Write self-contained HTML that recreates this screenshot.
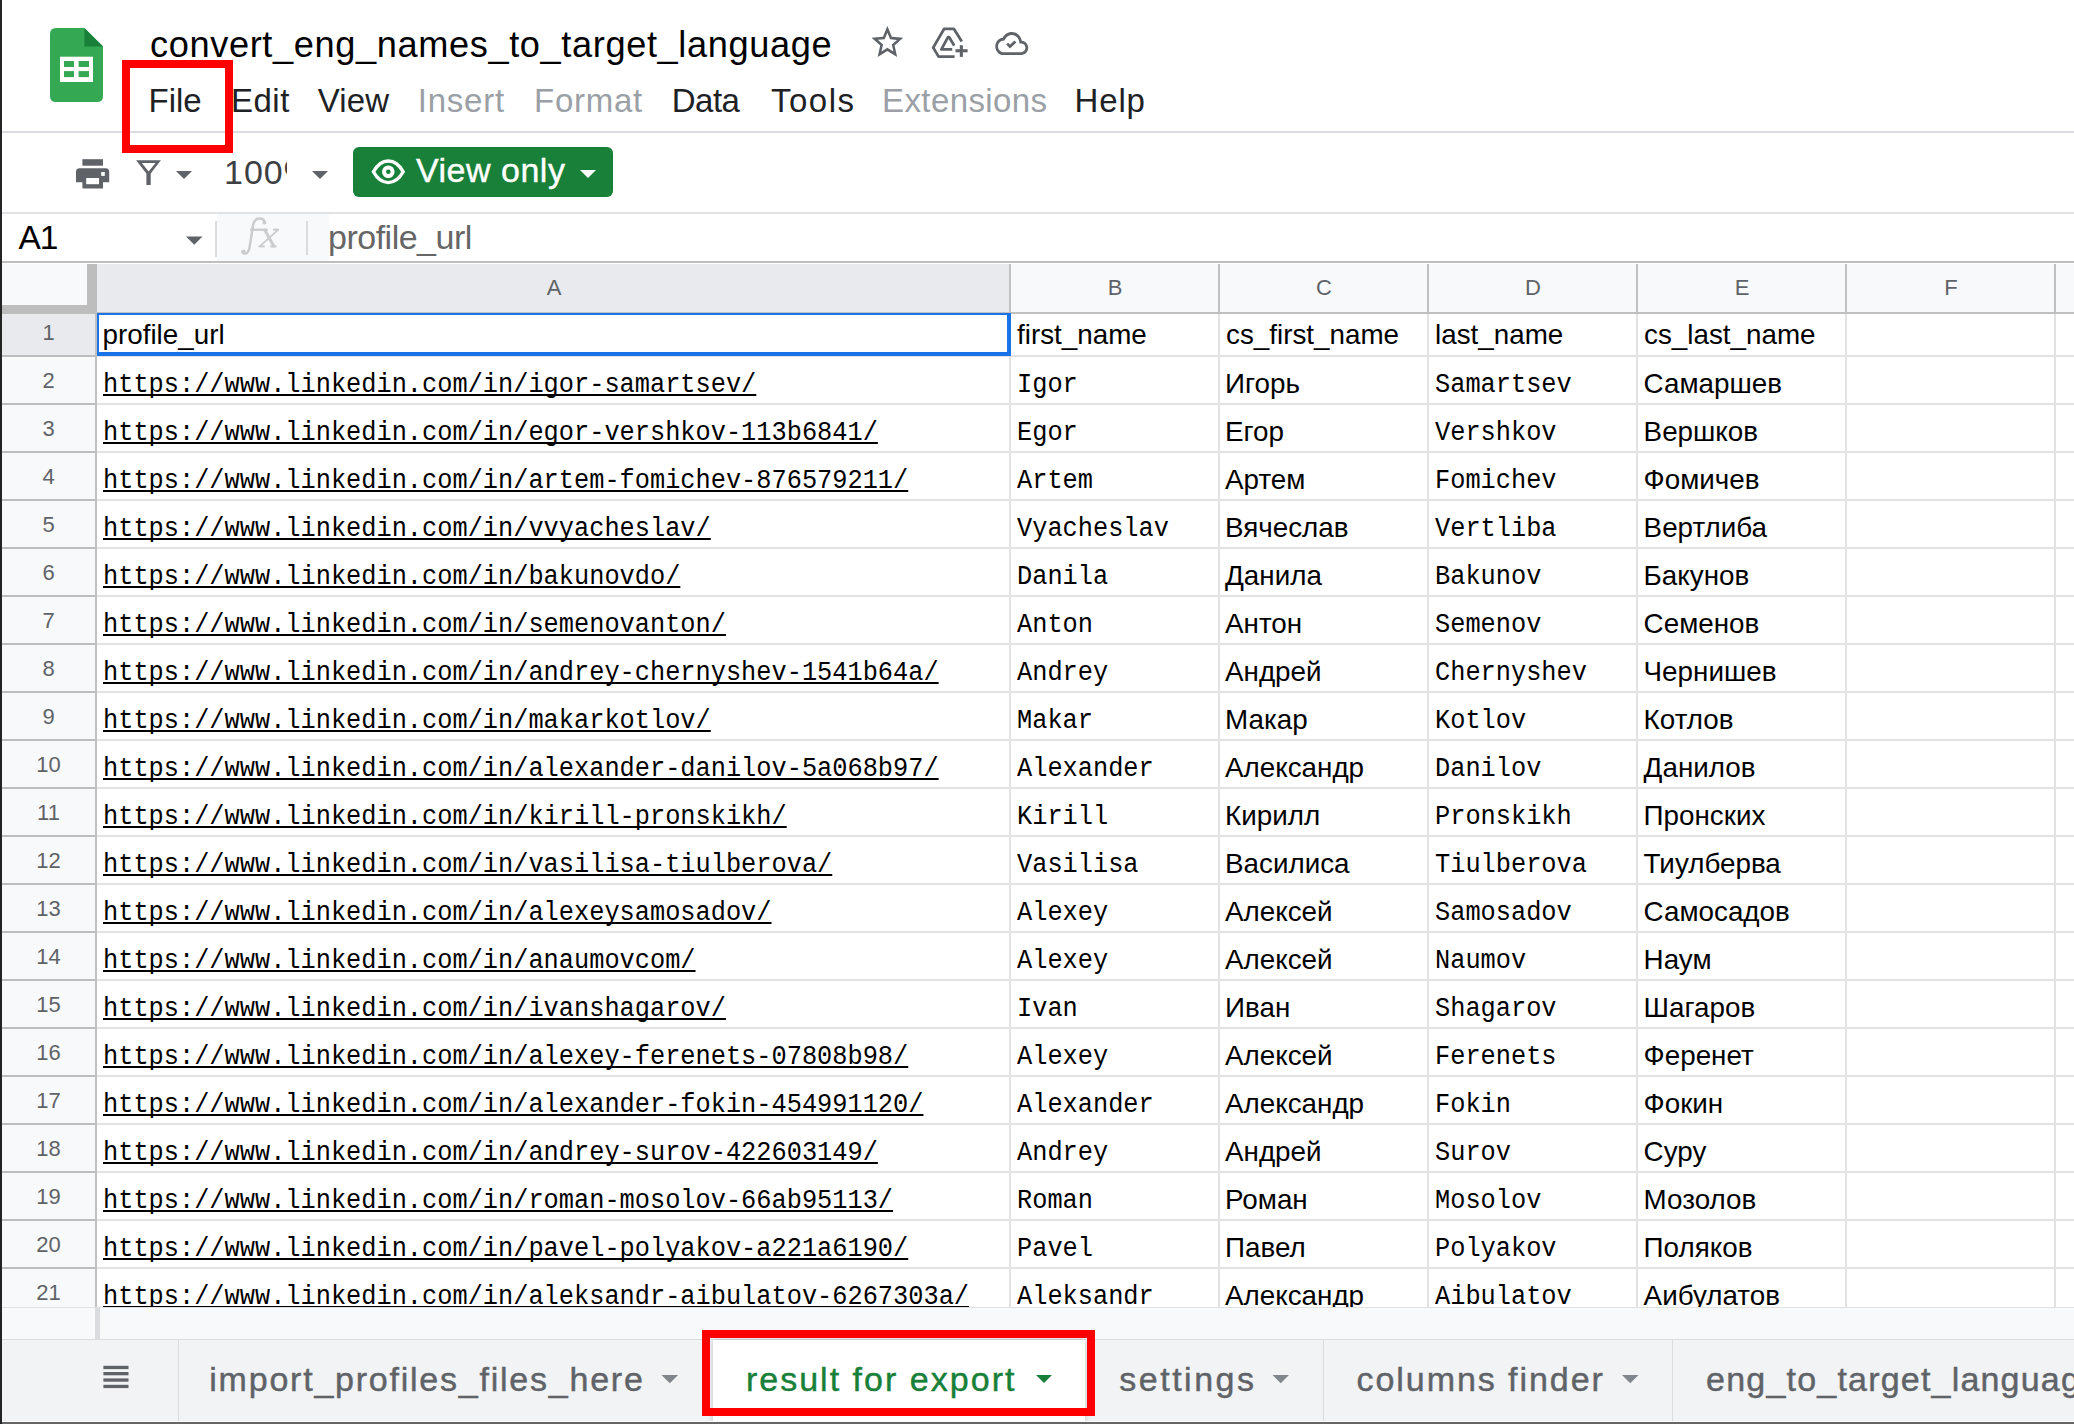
<!DOCTYPE html>
<html><head><meta charset="utf-8"><title>convert_eng_names_to_target_language</title>
<style>
html,body{margin:0;padding:0;}
body{width:2074px;height:1424px;overflow:hidden;position:relative;background:#fff;font-family:'Liberation Sans', sans-serif;}
.a{position:absolute;}
.t{position:absolute;white-space:pre;line-height:0;}
.c{display:inline-block;transform:translateX(-50%);}
</style></head><body>
<div class="a" style="left:0px;top:0px;width:2074px;height:1424px;background:#ffffff;"></div>
<div class="t" style="top:45.00px;font-size:36.2px;color:#000000;font-family:'Liberation Sans', sans-serif;left:150px;letter-spacing:0.62px;">convert_eng_names_to_target_language</div>
<div class="t" style="top:101.10px;font-size:33px;color:#202124;font-family:'Liberation Sans', sans-serif;left:148.5px;letter-spacing:0px;">File</div>
<div class="t" style="top:101.10px;font-size:33px;color:#202124;font-family:'Liberation Sans', sans-serif;left:231.1px;letter-spacing:0.45px;">Edit</div>
<div class="t" style="top:101.10px;font-size:33px;color:#202124;font-family:'Liberation Sans', sans-serif;left:317.79999999999995px;letter-spacing:0.1px;">View</div>
<div class="t" style="top:101.10px;font-size:33px;color:#9aa0a6;font-family:'Liberation Sans', sans-serif;left:417.8px;letter-spacing:0.75px;">Insert</div>
<div class="t" style="top:101.10px;font-size:33px;color:#9aa0a6;font-family:'Liberation Sans', sans-serif;left:534px;letter-spacing:0.74px;">Format</div>
<div class="t" style="top:101.10px;font-size:33px;color:#202124;font-family:'Liberation Sans', sans-serif;left:671.8px;letter-spacing:-0.55px;">Data</div>
<div class="t" style="top:101.10px;font-size:33px;color:#202124;font-family:'Liberation Sans', sans-serif;left:771px;letter-spacing:1.5px;">Tools</div>
<div class="t" style="top:101.10px;font-size:33px;color:#9aa0a6;font-family:'Liberation Sans', sans-serif;left:882px;letter-spacing:0.4px;">Extensions</div>
<div class="t" style="top:101.10px;font-size:33px;color:#202124;font-family:'Liberation Sans', sans-serif;left:1074.6px;letter-spacing:0.8px;">Help</div>
<div class="a" style="left:2px;top:131px;width:2072px;height:2px;background:#dadce0;"></div>
<div class="a" style="left:200px;top:140px;width:87px;height:60px;overflow:hidden;">
<div class="t" style="top:32.00px;font-size:34px;color:#3c4043;font-family:'Liberation Sans', sans-serif;left:24px;letter-spacing:1px;">100%</div>
</div>
<div class="a" style="left:353px;top:147px;width:260px;height:50px;background:#188038;border-radius:6px;"></div>
<div class="t" style="top:170.00px;font-size:34px;color:#ffffff;font-family:'Liberation Sans', sans-serif;left:416px;letter-spacing:0.5px;-webkit-text-stroke:0.4px #fff;">View only</div>
<div class="a" style="left:2px;top:212px;width:2072px;height:2px;background:#e0e2e5;"></div>
<div class="t" style="top:237.50px;font-size:33.5px;color:#000000;font-family:'Liberation Sans', sans-serif;left:18.5px;letter-spacing:-1px;">A1</div>
<div class="a" style="left:217px;top:214px;width:112px;height:48px;background:#f8f9fa;"></div>
<div class="a" style="left:215px;top:221px;width:2px;height:36px;background:#dadce0;"></div>
<div class="a" style="left:306px;top:221px;width:2px;height:34px;background:#dadce0;"></div>
<div class="t" style="top:237.00px;font-size:34px;color:#666666;font-family:'Liberation Sans', sans-serif;left:328px;letter-spacing:-0.5px;">profile_url</div>
<div class="a" style="left:2px;top:261px;width:2072px;height:2px;background:#bebebe;"></div>
<div class="a" style="left:2px;top:264px;width:2072px;height:48px;background:#f8f9fa;"></div>
<div class="a" style="left:97px;top:264px;width:913px;height:48px;background:#e8eaed;"></div>
<div class="t" style="top:287.50px;font-size:22px;color:#5f6368;font-family:'Liberation Sans', sans-serif;left:554.0px;width:0;text-align:center;"><span class=c>A</span></div>
<div class="t" style="top:287.50px;font-size:22px;color:#5f6368;font-family:'Liberation Sans', sans-serif;left:1115.0px;width:0;text-align:center;"><span class=c>B</span></div>
<div class="t" style="top:287.50px;font-size:22px;color:#5f6368;font-family:'Liberation Sans', sans-serif;left:1324.0px;width:0;text-align:center;"><span class=c>C</span></div>
<div class="t" style="top:287.50px;font-size:22px;color:#5f6368;font-family:'Liberation Sans', sans-serif;left:1533.0px;width:0;text-align:center;"><span class=c>D</span></div>
<div class="t" style="top:287.50px;font-size:22px;color:#5f6368;font-family:'Liberation Sans', sans-serif;left:1742.0px;width:0;text-align:center;"><span class=c>E</span></div>
<div class="t" style="top:287.50px;font-size:22px;color:#5f6368;font-family:'Liberation Sans', sans-serif;left:1951.0px;width:0;text-align:center;"><span class=c>F</span></div>
<div class="a" style="left:1009px;top:264px;width:2px;height:48px;background:#c0c0c0;"></div>
<div class="a" style="left:1218px;top:264px;width:2px;height:48px;background:#c0c0c0;"></div>
<div class="a" style="left:1427px;top:264px;width:2px;height:48px;background:#c0c0c0;"></div>
<div class="a" style="left:1636px;top:264px;width:2px;height:48px;background:#c0c0c0;"></div>
<div class="a" style="left:1845px;top:264px;width:2px;height:48px;background:#c0c0c0;"></div>
<div class="a" style="left:2054px;top:264px;width:2px;height:48px;background:#c0c0c0;"></div>
<div class="a" style="left:2px;top:312px;width:2072px;height:2px;background:#c0c0c0;"></div>
<div class="a" style="left:2px;top:314px;width:93px;height:993px;background:#f8f9fa;"></div>
<div class="a" style="left:2px;top:314px;width:93px;height:41px;background:#e8eaed;"></div>
<div class="a" style="left:95px;top:264px;width:2px;height:1043px;background:#c0c0c0;"></div>
<div class="a" style="left:97px;top:314px;width:1977px;height:993px;overflow:hidden;">
<div class="a" style="left:0px;top:41px;width:1977px;height:2px;background:#e2e2e2;"></div>
<div class="a" style="left:0px;top:89px;width:1977px;height:2px;background:#e2e2e2;"></div>
<div class="a" style="left:0px;top:137px;width:1977px;height:2px;background:#e2e2e2;"></div>
<div class="a" style="left:0px;top:185px;width:1977px;height:2px;background:#e2e2e2;"></div>
<div class="a" style="left:0px;top:233px;width:1977px;height:2px;background:#e2e2e2;"></div>
<div class="a" style="left:0px;top:281px;width:1977px;height:2px;background:#e2e2e2;"></div>
<div class="a" style="left:0px;top:329px;width:1977px;height:2px;background:#e2e2e2;"></div>
<div class="a" style="left:0px;top:377px;width:1977px;height:2px;background:#e2e2e2;"></div>
<div class="a" style="left:0px;top:425px;width:1977px;height:2px;background:#e2e2e2;"></div>
<div class="a" style="left:0px;top:473px;width:1977px;height:2px;background:#e2e2e2;"></div>
<div class="a" style="left:0px;top:521px;width:1977px;height:2px;background:#e2e2e2;"></div>
<div class="a" style="left:0px;top:569px;width:1977px;height:2px;background:#e2e2e2;"></div>
<div class="a" style="left:0px;top:617px;width:1977px;height:2px;background:#e2e2e2;"></div>
<div class="a" style="left:0px;top:665px;width:1977px;height:2px;background:#e2e2e2;"></div>
<div class="a" style="left:0px;top:713px;width:1977px;height:2px;background:#e2e2e2;"></div>
<div class="a" style="left:0px;top:761px;width:1977px;height:2px;background:#e2e2e2;"></div>
<div class="a" style="left:0px;top:809px;width:1977px;height:2px;background:#e2e2e2;"></div>
<div class="a" style="left:0px;top:857px;width:1977px;height:2px;background:#e2e2e2;"></div>
<div class="a" style="left:0px;top:905px;width:1977px;height:2px;background:#e2e2e2;"></div>
<div class="a" style="left:0px;top:953px;width:1977px;height:2px;background:#e2e2e2;"></div>
<div class="a" style="left:0px;top:1001px;width:1977px;height:2px;background:#e2e2e2;"></div>
<div class="a" style="left:912px;top:0px;width:2px;height:993px;background:#e2e2e2;"></div>
<div class="a" style="left:1121px;top:0px;width:2px;height:993px;background:#e2e2e2;"></div>
<div class="a" style="left:1330px;top:0px;width:2px;height:993px;background:#e2e2e2;"></div>
<div class="a" style="left:1539px;top:0px;width:2px;height:993px;background:#e2e2e2;"></div>
<div class="a" style="left:1748px;top:0px;width:2px;height:993px;background:#e2e2e2;"></div>
<div class="a" style="left:1957px;top:0px;width:2px;height:993px;background:#e2e2e2;"></div>
<div class="t" style="top:20.50px;font-size:27.8px;color:#000000;font-family:'Liberation Sans', sans-serif;left:5.5px;">profile_url</div>
<div class="t" style="top:20.50px;font-size:27.8px;color:#000000;font-family:'Liberation Sans', sans-serif;left:920px;">first_name</div>
<div class="t" style="top:20.50px;font-size:27.8px;color:#000000;font-family:'Liberation Sans', sans-serif;left:1129px;">cs_first_name</div>
<div class="t" style="top:20.50px;font-size:27.8px;color:#000000;font-family:'Liberation Sans', sans-serif;left:1338px;">last_name</div>
<div class="t" style="top:20.50px;font-size:27.8px;color:#000000;font-family:'Liberation Sans', sans-serif;left:1547px;">cs_last_name</div>
<div class="t" style="top:71.00px;font-size:27px;color:#000000;font-family:'Liberation Mono', monospace;left:6px;transform:scaleX(0.9377);transform-origin:0 0;text-decoration:underline;text-decoration-thickness:2px;text-decoration-skip-ink:none;text-underline-offset:2px;">https://www.linkedin.com/in/igor-samartsev/</div>
<div class="t" style="top:71.00px;font-size:27px;color:#000000;font-family:'Liberation Mono', monospace;left:920.3px;transform:scaleX(0.9377);transform-origin:0 0;">Igor</div>
<div class="t" style="top:69.50px;font-size:27.8px;color:#000000;font-family:'Liberation Sans', sans-serif;left:1128px;">Игорь</div>
<div class="t" style="top:71.00px;font-size:27px;color:#000000;font-family:'Liberation Mono', monospace;left:1338.4px;transform:scaleX(0.9377);transform-origin:0 0;">Samartsev</div>
<div class="t" style="top:69.50px;font-size:27.8px;color:#000000;font-family:'Liberation Sans', sans-serif;left:1546.6px;">Самаршев</div>
<div class="t" style="top:119.00px;font-size:27px;color:#000000;font-family:'Liberation Mono', monospace;left:6px;transform:scaleX(0.9377);transform-origin:0 0;text-decoration:underline;text-decoration-thickness:2px;text-decoration-skip-ink:none;text-underline-offset:2px;">https://www.linkedin.com/in/egor-vershkov-113b6841/</div>
<div class="t" style="top:119.00px;font-size:27px;color:#000000;font-family:'Liberation Mono', monospace;left:920.3px;transform:scaleX(0.9377);transform-origin:0 0;">Egor</div>
<div class="t" style="top:117.50px;font-size:27.8px;color:#000000;font-family:'Liberation Sans', sans-serif;left:1128px;">Егор</div>
<div class="t" style="top:119.00px;font-size:27px;color:#000000;font-family:'Liberation Mono', monospace;left:1338.4px;transform:scaleX(0.9377);transform-origin:0 0;">Vershkov</div>
<div class="t" style="top:117.50px;font-size:27.8px;color:#000000;font-family:'Liberation Sans', sans-serif;left:1546.6px;">Вершков</div>
<div class="t" style="top:167.00px;font-size:27px;color:#000000;font-family:'Liberation Mono', monospace;left:6px;transform:scaleX(0.9377);transform-origin:0 0;text-decoration:underline;text-decoration-thickness:2px;text-decoration-skip-ink:none;text-underline-offset:2px;">https://www.linkedin.com/in/artem-fomichev-876579211/</div>
<div class="t" style="top:167.00px;font-size:27px;color:#000000;font-family:'Liberation Mono', monospace;left:920.3px;transform:scaleX(0.9377);transform-origin:0 0;">Artem</div>
<div class="t" style="top:165.50px;font-size:27.8px;color:#000000;font-family:'Liberation Sans', sans-serif;left:1128px;">Артем</div>
<div class="t" style="top:167.00px;font-size:27px;color:#000000;font-family:'Liberation Mono', monospace;left:1338.4px;transform:scaleX(0.9377);transform-origin:0 0;">Fomichev</div>
<div class="t" style="top:165.50px;font-size:27.8px;color:#000000;font-family:'Liberation Sans', sans-serif;left:1546.6px;">Фомичев</div>
<div class="t" style="top:215.00px;font-size:27px;color:#000000;font-family:'Liberation Mono', monospace;left:6px;transform:scaleX(0.9377);transform-origin:0 0;text-decoration:underline;text-decoration-thickness:2px;text-decoration-skip-ink:none;text-underline-offset:2px;">https://www.linkedin.com/in/vvyacheslav/</div>
<div class="t" style="top:215.00px;font-size:27px;color:#000000;font-family:'Liberation Mono', monospace;left:920.3px;transform:scaleX(0.9377);transform-origin:0 0;">Vyacheslav</div>
<div class="t" style="top:213.50px;font-size:27.8px;color:#000000;font-family:'Liberation Sans', sans-serif;left:1128px;">Вячеслав</div>
<div class="t" style="top:215.00px;font-size:27px;color:#000000;font-family:'Liberation Mono', monospace;left:1338.4px;transform:scaleX(0.9377);transform-origin:0 0;">Vertliba</div>
<div class="t" style="top:213.50px;font-size:27.8px;color:#000000;font-family:'Liberation Sans', sans-serif;left:1546.6px;">Вертлиба</div>
<div class="t" style="top:263.00px;font-size:27px;color:#000000;font-family:'Liberation Mono', monospace;left:6px;transform:scaleX(0.9377);transform-origin:0 0;text-decoration:underline;text-decoration-thickness:2px;text-decoration-skip-ink:none;text-underline-offset:2px;">https://www.linkedin.com/in/bakunovdo/</div>
<div class="t" style="top:263.00px;font-size:27px;color:#000000;font-family:'Liberation Mono', monospace;left:920.3px;transform:scaleX(0.9377);transform-origin:0 0;">Danila</div>
<div class="t" style="top:261.50px;font-size:27.8px;color:#000000;font-family:'Liberation Sans', sans-serif;left:1128px;">Данила</div>
<div class="t" style="top:263.00px;font-size:27px;color:#000000;font-family:'Liberation Mono', monospace;left:1338.4px;transform:scaleX(0.9377);transform-origin:0 0;">Bakunov</div>
<div class="t" style="top:261.50px;font-size:27.8px;color:#000000;font-family:'Liberation Sans', sans-serif;left:1546.6px;">Бакунов</div>
<div class="t" style="top:311.00px;font-size:27px;color:#000000;font-family:'Liberation Mono', monospace;left:6px;transform:scaleX(0.9377);transform-origin:0 0;text-decoration:underline;text-decoration-thickness:2px;text-decoration-skip-ink:none;text-underline-offset:2px;">https://www.linkedin.com/in/semenovanton/</div>
<div class="t" style="top:311.00px;font-size:27px;color:#000000;font-family:'Liberation Mono', monospace;left:920.3px;transform:scaleX(0.9377);transform-origin:0 0;">Anton</div>
<div class="t" style="top:309.50px;font-size:27.8px;color:#000000;font-family:'Liberation Sans', sans-serif;left:1128px;">Антон</div>
<div class="t" style="top:311.00px;font-size:27px;color:#000000;font-family:'Liberation Mono', monospace;left:1338.4px;transform:scaleX(0.9377);transform-origin:0 0;">Semenov</div>
<div class="t" style="top:309.50px;font-size:27.8px;color:#000000;font-family:'Liberation Sans', sans-serif;left:1546.6px;">Семенов</div>
<div class="t" style="top:359.00px;font-size:27px;color:#000000;font-family:'Liberation Mono', monospace;left:6px;transform:scaleX(0.9377);transform-origin:0 0;text-decoration:underline;text-decoration-thickness:2px;text-decoration-skip-ink:none;text-underline-offset:2px;">https://www.linkedin.com/in/andrey-chernyshev-1541b64a/</div>
<div class="t" style="top:359.00px;font-size:27px;color:#000000;font-family:'Liberation Mono', monospace;left:920.3px;transform:scaleX(0.9377);transform-origin:0 0;">Andrey</div>
<div class="t" style="top:357.50px;font-size:27.8px;color:#000000;font-family:'Liberation Sans', sans-serif;left:1128px;">Андрей</div>
<div class="t" style="top:359.00px;font-size:27px;color:#000000;font-family:'Liberation Mono', monospace;left:1338.4px;transform:scaleX(0.9377);transform-origin:0 0;">Chernyshev</div>
<div class="t" style="top:357.50px;font-size:27.8px;color:#000000;font-family:'Liberation Sans', sans-serif;left:1546.6px;">Чернишев</div>
<div class="t" style="top:407.00px;font-size:27px;color:#000000;font-family:'Liberation Mono', monospace;left:6px;transform:scaleX(0.9377);transform-origin:0 0;text-decoration:underline;text-decoration-thickness:2px;text-decoration-skip-ink:none;text-underline-offset:2px;">https://www.linkedin.com/in/makarkotlov/</div>
<div class="t" style="top:407.00px;font-size:27px;color:#000000;font-family:'Liberation Mono', monospace;left:920.3px;transform:scaleX(0.9377);transform-origin:0 0;">Makar</div>
<div class="t" style="top:405.50px;font-size:27.8px;color:#000000;font-family:'Liberation Sans', sans-serif;left:1128px;">Макар</div>
<div class="t" style="top:407.00px;font-size:27px;color:#000000;font-family:'Liberation Mono', monospace;left:1338.4px;transform:scaleX(0.9377);transform-origin:0 0;">Kotlov</div>
<div class="t" style="top:405.50px;font-size:27.8px;color:#000000;font-family:'Liberation Sans', sans-serif;left:1546.6px;">Котлов</div>
<div class="t" style="top:455.00px;font-size:27px;color:#000000;font-family:'Liberation Mono', monospace;left:6px;transform:scaleX(0.9377);transform-origin:0 0;text-decoration:underline;text-decoration-thickness:2px;text-decoration-skip-ink:none;text-underline-offset:2px;">https://www.linkedin.com/in/alexander-danilov-5a068b97/</div>
<div class="t" style="top:455.00px;font-size:27px;color:#000000;font-family:'Liberation Mono', monospace;left:920.3px;transform:scaleX(0.9377);transform-origin:0 0;">Alexander</div>
<div class="t" style="top:453.50px;font-size:27.8px;color:#000000;font-family:'Liberation Sans', sans-serif;left:1128px;">Александр</div>
<div class="t" style="top:455.00px;font-size:27px;color:#000000;font-family:'Liberation Mono', monospace;left:1338.4px;transform:scaleX(0.9377);transform-origin:0 0;">Danilov</div>
<div class="t" style="top:453.50px;font-size:27.8px;color:#000000;font-family:'Liberation Sans', sans-serif;left:1546.6px;">Данилов</div>
<div class="t" style="top:503.00px;font-size:27px;color:#000000;font-family:'Liberation Mono', monospace;left:6px;transform:scaleX(0.9377);transform-origin:0 0;text-decoration:underline;text-decoration-thickness:2px;text-decoration-skip-ink:none;text-underline-offset:2px;">https://www.linkedin.com/in/kirill-pronskikh/</div>
<div class="t" style="top:503.00px;font-size:27px;color:#000000;font-family:'Liberation Mono', monospace;left:920.3px;transform:scaleX(0.9377);transform-origin:0 0;">Kirill</div>
<div class="t" style="top:501.50px;font-size:27.8px;color:#000000;font-family:'Liberation Sans', sans-serif;left:1128px;">Кирилл</div>
<div class="t" style="top:503.00px;font-size:27px;color:#000000;font-family:'Liberation Mono', monospace;left:1338.4px;transform:scaleX(0.9377);transform-origin:0 0;">Pronskikh</div>
<div class="t" style="top:501.50px;font-size:27.8px;color:#000000;font-family:'Liberation Sans', sans-serif;left:1546.6px;">Пронских</div>
<div class="t" style="top:551.00px;font-size:27px;color:#000000;font-family:'Liberation Mono', monospace;left:6px;transform:scaleX(0.9377);transform-origin:0 0;text-decoration:underline;text-decoration-thickness:2px;text-decoration-skip-ink:none;text-underline-offset:2px;">https://www.linkedin.com/in/vasilisa-tiulberova/</div>
<div class="t" style="top:551.00px;font-size:27px;color:#000000;font-family:'Liberation Mono', monospace;left:920.3px;transform:scaleX(0.9377);transform-origin:0 0;">Vasilisa</div>
<div class="t" style="top:549.50px;font-size:27.8px;color:#000000;font-family:'Liberation Sans', sans-serif;left:1128px;">Василиса</div>
<div class="t" style="top:551.00px;font-size:27px;color:#000000;font-family:'Liberation Mono', monospace;left:1338.4px;transform:scaleX(0.9377);transform-origin:0 0;">Tiulberova</div>
<div class="t" style="top:549.50px;font-size:27.8px;color:#000000;font-family:'Liberation Sans', sans-serif;left:1546.6px;">Тиулберва</div>
<div class="t" style="top:599.00px;font-size:27px;color:#000000;font-family:'Liberation Mono', monospace;left:6px;transform:scaleX(0.9377);transform-origin:0 0;text-decoration:underline;text-decoration-thickness:2px;text-decoration-skip-ink:none;text-underline-offset:2px;">https://www.linkedin.com/in/alexeysamosadov/</div>
<div class="t" style="top:599.00px;font-size:27px;color:#000000;font-family:'Liberation Mono', monospace;left:920.3px;transform:scaleX(0.9377);transform-origin:0 0;">Alexey</div>
<div class="t" style="top:597.50px;font-size:27.8px;color:#000000;font-family:'Liberation Sans', sans-serif;left:1128px;">Алексей</div>
<div class="t" style="top:599.00px;font-size:27px;color:#000000;font-family:'Liberation Mono', monospace;left:1338.4px;transform:scaleX(0.9377);transform-origin:0 0;">Samosadov</div>
<div class="t" style="top:597.50px;font-size:27.8px;color:#000000;font-family:'Liberation Sans', sans-serif;left:1546.6px;">Самосадов</div>
<div class="t" style="top:647.00px;font-size:27px;color:#000000;font-family:'Liberation Mono', monospace;left:6px;transform:scaleX(0.9377);transform-origin:0 0;text-decoration:underline;text-decoration-thickness:2px;text-decoration-skip-ink:none;text-underline-offset:2px;">https://www.linkedin.com/in/anaumovcom/</div>
<div class="t" style="top:647.00px;font-size:27px;color:#000000;font-family:'Liberation Mono', monospace;left:920.3px;transform:scaleX(0.9377);transform-origin:0 0;">Alexey</div>
<div class="t" style="top:645.50px;font-size:27.8px;color:#000000;font-family:'Liberation Sans', sans-serif;left:1128px;">Алексей</div>
<div class="t" style="top:647.00px;font-size:27px;color:#000000;font-family:'Liberation Mono', monospace;left:1338.4px;transform:scaleX(0.9377);transform-origin:0 0;">Naumov</div>
<div class="t" style="top:645.50px;font-size:27.8px;color:#000000;font-family:'Liberation Sans', sans-serif;left:1546.6px;">Наум</div>
<div class="t" style="top:695.00px;font-size:27px;color:#000000;font-family:'Liberation Mono', monospace;left:6px;transform:scaleX(0.9377);transform-origin:0 0;text-decoration:underline;text-decoration-thickness:2px;text-decoration-skip-ink:none;text-underline-offset:2px;">https://www.linkedin.com/in/ivanshagarov/</div>
<div class="t" style="top:695.00px;font-size:27px;color:#000000;font-family:'Liberation Mono', monospace;left:920.3px;transform:scaleX(0.9377);transform-origin:0 0;">Ivan</div>
<div class="t" style="top:693.50px;font-size:27.8px;color:#000000;font-family:'Liberation Sans', sans-serif;left:1128px;">Иван</div>
<div class="t" style="top:695.00px;font-size:27px;color:#000000;font-family:'Liberation Mono', monospace;left:1338.4px;transform:scaleX(0.9377);transform-origin:0 0;">Shagarov</div>
<div class="t" style="top:693.50px;font-size:27.8px;color:#000000;font-family:'Liberation Sans', sans-serif;left:1546.6px;">Шагаров</div>
<div class="t" style="top:743.00px;font-size:27px;color:#000000;font-family:'Liberation Mono', monospace;left:6px;transform:scaleX(0.9377);transform-origin:0 0;text-decoration:underline;text-decoration-thickness:2px;text-decoration-skip-ink:none;text-underline-offset:2px;">https://www.linkedin.com/in/alexey-ferenets-07808b98/</div>
<div class="t" style="top:743.00px;font-size:27px;color:#000000;font-family:'Liberation Mono', monospace;left:920.3px;transform:scaleX(0.9377);transform-origin:0 0;">Alexey</div>
<div class="t" style="top:741.50px;font-size:27.8px;color:#000000;font-family:'Liberation Sans', sans-serif;left:1128px;">Алексей</div>
<div class="t" style="top:743.00px;font-size:27px;color:#000000;font-family:'Liberation Mono', monospace;left:1338.4px;transform:scaleX(0.9377);transform-origin:0 0;">Ferenets</div>
<div class="t" style="top:741.50px;font-size:27.8px;color:#000000;font-family:'Liberation Sans', sans-serif;left:1546.6px;">Ференет</div>
<div class="t" style="top:791.00px;font-size:27px;color:#000000;font-family:'Liberation Mono', monospace;left:6px;transform:scaleX(0.9377);transform-origin:0 0;text-decoration:underline;text-decoration-thickness:2px;text-decoration-skip-ink:none;text-underline-offset:2px;">https://www.linkedin.com/in/alexander-fokin-454991120/</div>
<div class="t" style="top:791.00px;font-size:27px;color:#000000;font-family:'Liberation Mono', monospace;left:920.3px;transform:scaleX(0.9377);transform-origin:0 0;">Alexander</div>
<div class="t" style="top:789.50px;font-size:27.8px;color:#000000;font-family:'Liberation Sans', sans-serif;left:1128px;">Александр</div>
<div class="t" style="top:791.00px;font-size:27px;color:#000000;font-family:'Liberation Mono', monospace;left:1338.4px;transform:scaleX(0.9377);transform-origin:0 0;">Fokin</div>
<div class="t" style="top:789.50px;font-size:27.8px;color:#000000;font-family:'Liberation Sans', sans-serif;left:1546.6px;">Фокин</div>
<div class="t" style="top:839.00px;font-size:27px;color:#000000;font-family:'Liberation Mono', monospace;left:6px;transform:scaleX(0.9377);transform-origin:0 0;text-decoration:underline;text-decoration-thickness:2px;text-decoration-skip-ink:none;text-underline-offset:2px;">https://www.linkedin.com/in/andrey-surov-422603149/</div>
<div class="t" style="top:839.00px;font-size:27px;color:#000000;font-family:'Liberation Mono', monospace;left:920.3px;transform:scaleX(0.9377);transform-origin:0 0;">Andrey</div>
<div class="t" style="top:837.50px;font-size:27.8px;color:#000000;font-family:'Liberation Sans', sans-serif;left:1128px;">Андрей</div>
<div class="t" style="top:839.00px;font-size:27px;color:#000000;font-family:'Liberation Mono', monospace;left:1338.4px;transform:scaleX(0.9377);transform-origin:0 0;">Surov</div>
<div class="t" style="top:837.50px;font-size:27.8px;color:#000000;font-family:'Liberation Sans', sans-serif;left:1546.6px;">Суру</div>
<div class="t" style="top:887.00px;font-size:27px;color:#000000;font-family:'Liberation Mono', monospace;left:6px;transform:scaleX(0.9377);transform-origin:0 0;text-decoration:underline;text-decoration-thickness:2px;text-decoration-skip-ink:none;text-underline-offset:2px;">https://www.linkedin.com/in/roman-mosolov-66ab95113/</div>
<div class="t" style="top:887.00px;font-size:27px;color:#000000;font-family:'Liberation Mono', monospace;left:920.3px;transform:scaleX(0.9377);transform-origin:0 0;">Roman</div>
<div class="t" style="top:885.50px;font-size:27.8px;color:#000000;font-family:'Liberation Sans', sans-serif;left:1128px;">Роман</div>
<div class="t" style="top:887.00px;font-size:27px;color:#000000;font-family:'Liberation Mono', monospace;left:1338.4px;transform:scaleX(0.9377);transform-origin:0 0;">Mosolov</div>
<div class="t" style="top:885.50px;font-size:27.8px;color:#000000;font-family:'Liberation Sans', sans-serif;left:1546.6px;">Мозолов</div>
<div class="t" style="top:935.00px;font-size:27px;color:#000000;font-family:'Liberation Mono', monospace;left:6px;transform:scaleX(0.9377);transform-origin:0 0;text-decoration:underline;text-decoration-thickness:2px;text-decoration-skip-ink:none;text-underline-offset:2px;">https://www.linkedin.com/in/pavel-polyakov-a221a6190/</div>
<div class="t" style="top:935.00px;font-size:27px;color:#000000;font-family:'Liberation Mono', monospace;left:920.3px;transform:scaleX(0.9377);transform-origin:0 0;">Pavel</div>
<div class="t" style="top:933.50px;font-size:27.8px;color:#000000;font-family:'Liberation Sans', sans-serif;left:1128px;">Павел</div>
<div class="t" style="top:935.00px;font-size:27px;color:#000000;font-family:'Liberation Mono', monospace;left:1338.4px;transform:scaleX(0.9377);transform-origin:0 0;">Polyakov</div>
<div class="t" style="top:933.50px;font-size:27.8px;color:#000000;font-family:'Liberation Sans', sans-serif;left:1546.6px;">Поляков</div>
<div class="t" style="top:983.00px;font-size:27px;color:#000000;font-family:'Liberation Mono', monospace;left:6px;transform:scaleX(0.9377);transform-origin:0 0;text-decoration:underline;text-decoration-thickness:2px;text-decoration-skip-ink:none;text-underline-offset:2px;">https://www.linkedin.com/in/aleksandr-aibulatov-6267303a/</div>
<div class="t" style="top:983.00px;font-size:27px;color:#000000;font-family:'Liberation Mono', monospace;left:920.3px;transform:scaleX(0.9377);transform-origin:0 0;">Aleksandr</div>
<div class="t" style="top:981.50px;font-size:27.8px;color:#000000;font-family:'Liberation Sans', sans-serif;left:1128px;">Александр</div>
<div class="t" style="top:983.00px;font-size:27px;color:#000000;font-family:'Liberation Mono', monospace;left:1338.4px;transform:scaleX(0.9377);transform-origin:0 0;">Aibulatov</div>
<div class="t" style="top:981.50px;font-size:27.8px;color:#000000;font-family:'Liberation Sans', sans-serif;left:1546.6px;">Аибулатов</div>
<div class="a" style="left:0px;top:-1px;width:914px;height:2px;background:#1a73e8;"></div>
<div class="a" style="left:0px;top:-1px;width:2px;height:43px;background:#1a73e8;"></div>
<div class="a" style="left:910px;top:-1px;width:4px;height:43px;background:#1a73e8;"></div>
<div class="a" style="left:0px;top:38px;width:914px;height:4px;background:#1a73e8;"></div>
</div>
<div class="a" style="left:97px;top:313px;width:914px;height:2px;background:#1a73e8;"></div>
<div class="a" style="left:2px;top:355px;width:93px;height:2px;background:#bdbdbd;"></div>
<div class="t" style="top:332.50px;font-size:22px;color:#5f6368;font-family:'Liberation Sans', sans-serif;left:48.5px;width:0;text-align:center;"><span class=c>1</span></div>
<div class="a" style="left:2px;top:403px;width:93px;height:2px;background:#bdbdbd;"></div>
<div class="t" style="top:380.50px;font-size:22px;color:#5f6368;font-family:'Liberation Sans', sans-serif;left:48.5px;width:0;text-align:center;"><span class=c>2</span></div>
<div class="a" style="left:2px;top:451px;width:93px;height:2px;background:#bdbdbd;"></div>
<div class="t" style="top:428.50px;font-size:22px;color:#5f6368;font-family:'Liberation Sans', sans-serif;left:48.5px;width:0;text-align:center;"><span class=c>3</span></div>
<div class="a" style="left:2px;top:499px;width:93px;height:2px;background:#bdbdbd;"></div>
<div class="t" style="top:476.50px;font-size:22px;color:#5f6368;font-family:'Liberation Sans', sans-serif;left:48.5px;width:0;text-align:center;"><span class=c>4</span></div>
<div class="a" style="left:2px;top:547px;width:93px;height:2px;background:#bdbdbd;"></div>
<div class="t" style="top:524.50px;font-size:22px;color:#5f6368;font-family:'Liberation Sans', sans-serif;left:48.5px;width:0;text-align:center;"><span class=c>5</span></div>
<div class="a" style="left:2px;top:595px;width:93px;height:2px;background:#bdbdbd;"></div>
<div class="t" style="top:572.50px;font-size:22px;color:#5f6368;font-family:'Liberation Sans', sans-serif;left:48.5px;width:0;text-align:center;"><span class=c>6</span></div>
<div class="a" style="left:2px;top:643px;width:93px;height:2px;background:#bdbdbd;"></div>
<div class="t" style="top:620.50px;font-size:22px;color:#5f6368;font-family:'Liberation Sans', sans-serif;left:48.5px;width:0;text-align:center;"><span class=c>7</span></div>
<div class="a" style="left:2px;top:691px;width:93px;height:2px;background:#bdbdbd;"></div>
<div class="t" style="top:668.50px;font-size:22px;color:#5f6368;font-family:'Liberation Sans', sans-serif;left:48.5px;width:0;text-align:center;"><span class=c>8</span></div>
<div class="a" style="left:2px;top:739px;width:93px;height:2px;background:#bdbdbd;"></div>
<div class="t" style="top:716.50px;font-size:22px;color:#5f6368;font-family:'Liberation Sans', sans-serif;left:48.5px;width:0;text-align:center;"><span class=c>9</span></div>
<div class="a" style="left:2px;top:787px;width:93px;height:2px;background:#bdbdbd;"></div>
<div class="t" style="top:764.50px;font-size:22px;color:#5f6368;font-family:'Liberation Sans', sans-serif;left:48.5px;width:0;text-align:center;"><span class=c>10</span></div>
<div class="a" style="left:2px;top:835px;width:93px;height:2px;background:#bdbdbd;"></div>
<div class="t" style="top:812.50px;font-size:22px;color:#5f6368;font-family:'Liberation Sans', sans-serif;left:48.5px;width:0;text-align:center;"><span class=c>11</span></div>
<div class="a" style="left:2px;top:883px;width:93px;height:2px;background:#bdbdbd;"></div>
<div class="t" style="top:860.50px;font-size:22px;color:#5f6368;font-family:'Liberation Sans', sans-serif;left:48.5px;width:0;text-align:center;"><span class=c>12</span></div>
<div class="a" style="left:2px;top:931px;width:93px;height:2px;background:#bdbdbd;"></div>
<div class="t" style="top:908.50px;font-size:22px;color:#5f6368;font-family:'Liberation Sans', sans-serif;left:48.5px;width:0;text-align:center;"><span class=c>13</span></div>
<div class="a" style="left:2px;top:979px;width:93px;height:2px;background:#bdbdbd;"></div>
<div class="t" style="top:956.50px;font-size:22px;color:#5f6368;font-family:'Liberation Sans', sans-serif;left:48.5px;width:0;text-align:center;"><span class=c>14</span></div>
<div class="a" style="left:2px;top:1027px;width:93px;height:2px;background:#bdbdbd;"></div>
<div class="t" style="top:1004.50px;font-size:22px;color:#5f6368;font-family:'Liberation Sans', sans-serif;left:48.5px;width:0;text-align:center;"><span class=c>15</span></div>
<div class="a" style="left:2px;top:1075px;width:93px;height:2px;background:#bdbdbd;"></div>
<div class="t" style="top:1052.50px;font-size:22px;color:#5f6368;font-family:'Liberation Sans', sans-serif;left:48.5px;width:0;text-align:center;"><span class=c>16</span></div>
<div class="a" style="left:2px;top:1123px;width:93px;height:2px;background:#bdbdbd;"></div>
<div class="t" style="top:1100.50px;font-size:22px;color:#5f6368;font-family:'Liberation Sans', sans-serif;left:48.5px;width:0;text-align:center;"><span class=c>17</span></div>
<div class="a" style="left:2px;top:1171px;width:93px;height:2px;background:#bdbdbd;"></div>
<div class="t" style="top:1148.50px;font-size:22px;color:#5f6368;font-family:'Liberation Sans', sans-serif;left:48.5px;width:0;text-align:center;"><span class=c>18</span></div>
<div class="a" style="left:2px;top:1219px;width:93px;height:2px;background:#bdbdbd;"></div>
<div class="t" style="top:1196.50px;font-size:22px;color:#5f6368;font-family:'Liberation Sans', sans-serif;left:48.5px;width:0;text-align:center;"><span class=c>19</span></div>
<div class="a" style="left:2px;top:1267px;width:93px;height:2px;background:#bdbdbd;"></div>
<div class="t" style="top:1244.50px;font-size:22px;color:#5f6368;font-family:'Liberation Sans', sans-serif;left:48.5px;width:0;text-align:center;"><span class=c>20</span></div>
<div class="t" style="top:1292.50px;font-size:22px;color:#5f6368;font-family:'Liberation Sans', sans-serif;left:48.5px;width:0;text-align:center;"><span class=c>21</span></div>
<div class="a" style="left:87px;top:264px;width:10px;height:49px;background:#bdbdbd;"></div>
<div class="a" style="left:2px;top:305px;width:95px;height:9px;background:#bdbdbd;"></div>
<div class="a" style="left:2px;top:264px;width:85px;height:41px;background:#f8f9fa;"></div>
<div class="a" style="left:2px;top:1307px;width:2072px;height:33px;background:#f8f9fa;"></div>
<div class="a" style="left:2px;top:1307px;width:2072px;height:1px;background:#e2e2e2;"></div>
<div class="a" style="left:95px;top:1308px;width:5px;height:32px;background:#dadce0;"></div>
<div class="a" style="left:2px;top:1339px;width:2072px;height:83px;background:#f1f3f4;"></div>
<div class="a" style="left:2px;top:1339px;width:2072px;height:1px;background:#dadce0;"></div>
<div class="a" style="left:178px;top:1340px;width:1px;height:82px;background:#dadce0;"></div>
<div class="a" style="left:1323px;top:1340px;width:1px;height:82px;background:#dadce0;"></div>
<div class="a" style="left:1672px;top:1340px;width:1px;height:82px;background:#dadce0;"></div>
<div class="a" style="left:713px;top:1340px;width:372px;height:82px;background:#ffffff;box-shadow:0 0 6px rgba(60,64,67,.28);"></div>
<div class="t" style="top:1379.00px;font-size:34px;color:#5f6368;font-family:'Liberation Sans', sans-serif;left:209.3px;letter-spacing:1.77px;-webkit-text-stroke:0.45px #5f6368;">import_profiles_files_here</div>
<div class="t" style="top:1379.00px;font-size:34px;color:#188038;font-family:'Liberation Sans', sans-serif;left:745.9px;letter-spacing:2.02px;-webkit-text-stroke:0.45px #188038;">result for export</div>
<div class="t" style="top:1379.00px;font-size:34px;color:#5f6368;font-family:'Liberation Sans', sans-serif;left:1119.3px;letter-spacing:2.5px;-webkit-text-stroke:0.45px #5f6368;">settings</div>
<div class="t" style="top:1379.00px;font-size:34px;color:#5f6368;font-family:'Liberation Sans', sans-serif;left:1356.5px;letter-spacing:1.94px;-webkit-text-stroke:0.45px #5f6368;">columns finder</div>
<div class="t" style="top:1379.00px;font-size:34px;color:#5f6368;font-family:'Liberation Sans', sans-serif;left:1706.1px;letter-spacing:1.2px;-webkit-text-stroke:0.45px #5f6368;">eng_to_target_language</div>
<div class="a" style="left:2px;top:1421px;width:2072px;height:1px;background:#fbfbfb;"></div>
<div class="a" style="left:0px;top:1422px;width:2074px;height:2px;background:#666666;"></div>
<div class="a" style="left:0px;top:0px;width:2px;height:1424px;background:#242424;"></div>
<svg class="a" style="left:0;top:0" width="2074" height="1424" viewBox="0 0 2074 1424">
<path d="M56 28 H84.4 L103 46.5 V96 Q103 102 97 102 H56 Q50 102 50 96 V34 Q50 28 56 28 Z" fill="#34a853"/>
<path d="M84.4 28 L103 46.5 H84.4 Z" fill="#188038"/>
<rect x="60" y="56.7" width="33" height="25.3" fill="#fff"/>
<rect x="64" y="61" width="10" height="6" fill="#34a853"/><rect x="78.6" y="61" width="10.4" height="6" fill="#34a853"/>
<rect x="64" y="71.1" width="10" height="6" fill="#34a853"/><rect x="78.6" y="71.1" width="10.4" height="6" fill="#34a853"/>
<g transform="translate(868.44 22.74) scale(1.58 1.63)" fill="#5f6368"><path d="M22 9.24l-7.19-.62L12 2 9.19 8.63 2 9.24l5.46 4.73L5.82 21 12 17.27 18.18 21l-1.63-7.03L22 9.24zM12 15.4l-3.76 2.27 1-4.28-3.32-2.88 4.38-.38L12 6.1l1.71 4.04 4.38.38-3.32 2.88 1 4.28L12 15.4z"/></g>
<g fill="none" stroke="#5f6368" stroke-width="2.8" stroke-linejoin="round">
<path d="M961.8 41.6 L953.8 28.8 H944.2 L933.2 47.6 L938.6 56.6 H954.6"/>
<path d="M954.2 45.6 L949.2 37.2 H948 L941.4 49.4 H952.2"/>
</g>
<rect x="959.8" y="45.2" width="3.1" height="11.7" fill="#5f6368"/>
<rect x="955.5" y="49.2" width="12.1" height="3.1" fill="#5f6368"/>
<g transform="translate(995.3 26.25) scale(1.371 1.4375)" fill="#5f6368"><path d="M19.35 10.04C18.67 6.59 15.64 4 12 4 9.11 4 6.6 5.64 5.35 8.04 2.34 8.36 0 10.91 0 14c0 3.310 2.69 6 6 6h13c2.76 0 5-2.24 5-5 0-2.64-2.05-4.78-4.65-4.96zM19 18H6c-2.21 0-4-1.79-4-4 0-2.05 1.53-3.76 3.560-3.97l1.07-.11.5-.95C8.08 7.14 9.94 6 12 6c2.62 0 4.88 1.86 5.39 4.43l.3 1.5 1.53.11c1.56.1 2.78 1.41 2.78 2.96 0 1.65-1.35 3-3 3z"/></g>
<path d="M1007.2 43.6 L1010 46.6 L1015.4 41.4" fill="none" stroke="#5f6368" stroke-width="2.8"/>
<g fill="#5f6368"><rect x="82.4" y="159.2" width="20.6" height="6.5"/>
<path d="M79.5 168.2 H105.7 Q109.2 168.2 109.2 171.7 V182.2 H103 V188.5 H82.4 V182.2 H76 V171.7 Q76 168.2 79.5 168.2 Z"/></g>
<rect x="86.2" y="178" width="12.8" height="6.2" fill="#fff"/><rect x="101.2" y="172" width="3.6" height="3.9" fill="#fff"/>
<path d="M136.1 160.3 H160.9 L150.7 173.4 V184.9 H146.4 V173.4 Z M141.8 162.9 L148.6 171.6 L155.5 162.9 Z" fill="#5f6368" fill-rule="evenodd"/>
<path d="M176 171 H192 L184 179 Z" fill="#5f6368"/>
<g fill="none" stroke="#cacccf" stroke-linecap="round">
<path d="M264.6 222.6 C264.2 220 262.2 218.6 259.6 218.6 C255.6 218.6 253.6 221.6 252.9 226 L249.7 246.5 C249.1 250.6 247.6 253.6 244.6 253.6 C243 253.6 242.4 252.6 242.6 251.2" stroke-width="2.5"/>
<path d="M264.8 230 L273.8 246.2" stroke-width="3"/>
<path d="M278 229.8 L260 246.2" stroke-width="1.8"/>
</g>
<g fill="#cacccf"><circle cx="264.4" cy="222.6" r="1.9"/><circle cx="243.6" cy="251.4" r="1.9"/>
<rect x="250.2" y="228.6" width="17.6" height="2.3"/><rect x="273" y="228.6" width="5.8" height="2.1"/>
<rect x="258.6" y="245.4" width="6.2" height="2"/><rect x="270.2" y="245.4" width="6.4" height="2"/></g>
<path d="M312 171 H328 L320 179 Z" fill="#5f6368"/>
<path d="M373.4 171.8 C377 165.3 382.3 161 388.3 161 C394.3 161 399.6 165.3 403.2 171.8 C399.6 178.3 394.3 182.6 388.3 182.6 C382.3 182.6 377 178.3 373.4 171.8 Z" fill="none" stroke="#fff" stroke-width="3.4"/>
<circle cx="388.3" cy="171.8" r="4.3" fill="none" stroke="#fff" stroke-width="4"/>
<path d="M580 170 H596 L588 178 Z" fill="#fff"/>
<path d="M186 236.5 H202.5 L194.25 244.8 Z" fill="#5f6368"/>
<g fill="#5f6368"><rect x="103.4" y="1365.8" width="25.1" height="3.3"/><rect x="103.4" y="1372" width="25.1" height="3.3"/><rect x="103.4" y="1378.4" width="25.1" height="3.3"/><rect x="103.4" y="1384.8" width="25.1" height="3.3"/></g>
<path d="M661.5 1375 H678.1 L669.8 1383.3 Z" fill="#80868b"/>
<path d="M1036 1375 H1052 L1044 1383 Z" fill="#188038"/>
<path d="M1272.5 1375 H1289 L1280.75 1383.25 Z" fill="#80868b"/>
<path d="M1622 1375 H1638.5 L1630.25 1383.25 Z" fill="#80868b"/>
<g fill="none" stroke="#ff0000" stroke-width="8">
<rect x="126" y="64" width="103" height="85"/>
<rect x="706" y="1334" width="385" height="78"/>
</g>
</svg>
</body></html>
